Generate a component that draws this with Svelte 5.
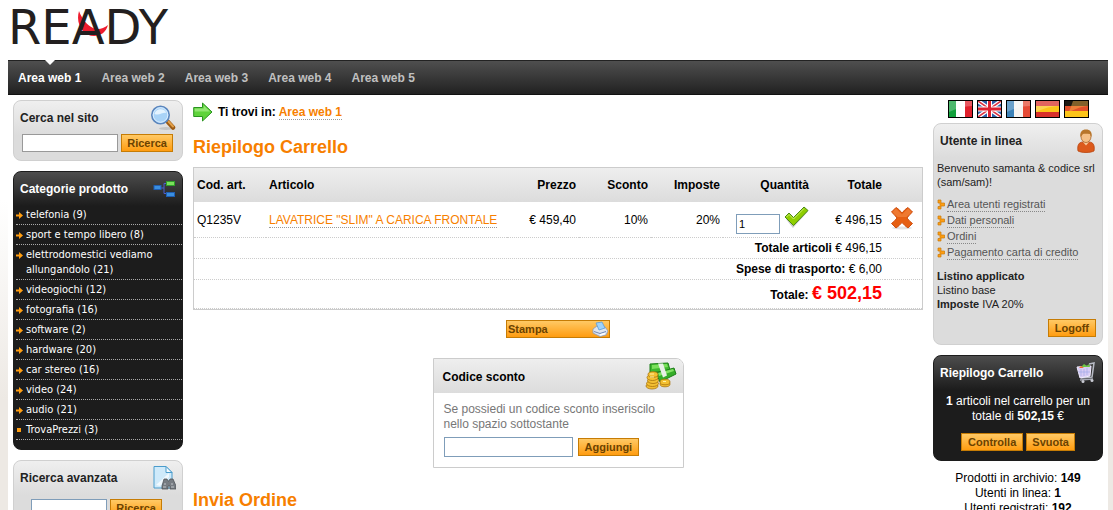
<!--
  App.svelte
  Shop cart page: top navigation, category sidebar, cart summary, user box.
-->
<script lang="ts">
  type Category = { name: string; count: number; leaf?: boolean };

  const areas = ['Area web 1', 'Area web 2', 'Area web 3', 'Area web 4', 'Area web 5'];
  let current_area = $state('Area web 1');

  const categories: Category[] = [
    { name: 'telefonia', count: 9 },
    { name: 'sport e tempo libero', count: 8 },
    { name: 'elettrodomestici vediamo allungandolo', count: 21 },
    { name: 'videogiochi', count: 12 },
    { name: 'fotografia', count: 16 },
    { name: 'software', count: 2 },
    { name: 'hardware', count: 20 },
    { name: 'car stereo', count: 16 },
    { name: 'video', count: 24 },
    { name: 'audio', count: 21 },
    { name: 'TrovaPrezzi', count: 3, leaf: true },
  ];

  const user_links = ['Area utenti registrati', 'Dati personali', 'Ordini', 'Pagamento carta di credito'];

  let quantity = $state('1');
  let search = $state('');
  let advanced = $state('');
  let discount_code = $state('');
</script>

<div class="page">
  <header>
    <a class="logo" href="#home">
      <svg viewBox="0 0 34 28" width="34" height="28" aria-hidden="true">
        <path d="M3 0C-1 14 8 25 18 25c7 0 12-4 14-11-5 4-10 5-15 3C11 14 6 8 3 0z" fill="#ee1c2e" />
      </svg>
      <span>READY</span>
    </a>
    <nav>
      {#each areas as area}
        <a href="#area" class:active={area === current_area} onclick={() => (current_area = area)}>{area}</a>
      {/each}
    </nav>
  </header>

  <div class="columns">
    <aside>
      <section class="panel">
        <div class="panel-head">
          <h2>Cerca nel sito</h2>
          <svg viewBox="0 0 26 26" width="26" height="26" aria-hidden="true">
            <ellipse cx="16" cy="23.500" rx="7" ry="1.500" fill="#c4c4c4" />
            <path d="M18 17l5 5.500" stroke="#9c5a12" stroke-width="4.500" stroke-linecap="round" />
            <path d="M18.500 16.500l4.500 5" stroke="#e2a04a" stroke-width="2" stroke-linecap="round" />
            <circle cx="10.500" cy="10" r="8.700" fill="#a9d3f7" stroke="#5b86bd" stroke-width="1.600" />
            <circle cx="10.500" cy="10" r="7.300" fill="none" stroke="#dceeff" stroke-width="1" />
            <path d="M4.500 9c1-5 9-7 12-1-4-1-7 3-12 1z" fill="#e4f3ff" />
          </svg>
        </div>
        <form class="search-row">
          <input type="text" aria-label="Cerca nel sito" bind:value={search} />
          <button type="button">Ricerca</button>
        </form>
      </section>

      <section class="panel dark">
        <div class="panel-head">
          <h2>Categorie prodotto</h2>
          <svg viewBox="0 0 24 18" width="24" height="18" aria-hidden="true">
            <path d="M8 8h4M12 3.500v10M12 3.500h3M12 13.500h3" stroke="#4a5fd0" fill="none" />
            <rect x="2" y="5.500" width="7" height="4" fill="#3b8fe0" stroke="#1f5fb4" />
            <rect x="14.500" y="1.500" width="8" height="4" fill="#7be05c" stroke="#2fa02a" />
            <rect x="14.500" y="12.500" width="8" height="4" fill="#3b8fe0" stroke="#1f5fb4" />
          </svg>
        </div>
        <ul class="categories">
          {#each categories as cat}
            <li>
              <svg viewBox="0 0 7 7" width="7" height="7" aria-hidden="true">
                {#if cat.leaf}
                  <rect x="1" y="1" width="4" height="4" fill="#ff9e12" />
                {:else}
                  <path d="M0 2.500h3V0l4 3.500L3 7V4.500H0z" fill="#ff9e12" />
                {/if}
              </svg>
              <a href="#categoria">{cat.name} ({cat.count})</a>
            </li>
          {/each}
        </ul>
      </section>

      <section class="panel">
        <div class="panel-head">
          <h2>Ricerca avanzata</h2>
          <svg viewBox="0 0 24 26" width="24" height="26" aria-hidden="true">
            <path d="M2 1.500h12l6 6V23H2z" fill="#cfeafa" stroke="#4a9ccc" />
            <path d="M4 20L17 8v4L8 21z" fill="#fff" opacity=".7" />
            <path d="M14 1.500v6h6z" fill="#f4fbff" stroke="#4a9ccc" />
            <path d="M12 14h3l1 2h1l1-2h3l3 7v3h-6v-3h-2v3h-6v-3z" fill="#777c82" stroke="#4e5358" stroke-width=".8" />
            <path d="M12 19h2M19 19h2M11 22h3M19 22h3" stroke="#c0c4c8" />
          </svg>
        </div>
        <form class="search-row advanced">
          <input type="text" aria-label="Ricerca avanzata" bind:value={advanced} />
          <button type="button">Ricerca</button>
        </form>
      </section>
    </aside>

    <main>
      <div class="breadcrumb">
        <svg viewBox="0 0 20 20" width="20" height="20" aria-hidden="true">
          <path d="M.700 5.500H9.500V1L19 10l-9.500 9v-4.500H.700z" fill="#5fd33c" stroke="#2a9420" stroke-linejoin="round" />
          <path d="M1.700 6.500h9V3.500L17 9.500H1.700z" fill="#a9ee8c" opacity=".7" />
        </svg>
        <span>Ti trovi in: <a href="#area">{current_area}</a></span>
      </div>

      <h1>Riepilogo Carrello</h1>

      <table>
        <colgroup>
          <col class="w-cell" /><col /><col class="w-cell" /><col class="w-cell" />
          <col class="w-cell" /><col class="w-qty" /><col class="w-total" /><col class="w-del" />
        </colgroup>
        <thead>
          <tr>
            <th class="left">Cod. art.</th>
            <th class="left">Articolo</th>
            <th>Prezzo</th>
            <th>Sconto</th>
            <th>Imposte</th>
            <th>Quantità</th>
            <th>Totale</th>
            <th aria-label="Elimina"></th>
          </tr>
        </thead>
        <tbody>
          <tr class="item">
            <td class="left">Q1235V</td>
            <td class="left"><a href="#articolo">LAVATRICE "SLIM" A CARICA FRONTALE</a></td>
            <td>€ 459,40</td>
            <td>10%</td>
            <td>20%</td>
            <td>
              <div class="qty">
                <input type="text" aria-label="Quantità" bind:value={quantity} />
                <button type="button" class="icon-button" aria-label="Aggiorna">
                  <svg viewBox="0 0 25 22" width="25" height="22">
                    <path d="M3 13l6 7.500L23 5" stroke="#ccc" stroke-width="2" fill="none" />
                    <path d="M1 11l4-4 4.500 4.500L20 1l4 3.500L9.500 19.500z" fill="#8fce00" stroke="#4b8a14" stroke-linejoin="round" />
                    <path d="M2.500 11L5 8.500l4.500 4.500L20 2.500" stroke="#c9ee6a" fill="none" />
                  </svg>
                </button>
              </div>
            </td>
            <td>€ 496,15</td>
            <td>
              <button type="button" class="icon-button" aria-label="Elimina">
                <svg viewBox="0 0 24 24" width="24" height="24">
                  <ellipse cx="12" cy="22" rx="10" ry="1.500" fill="#e2e2e2" />
                  <path d="M6 1.500Q9 3 12 7q3-4 6-5.500l4.500 4.500Q20 8 17 12q3 4 5.500 5.500L18 22q-3-2-6-5.500Q9 20 6 22l-4.500-4.500Q4 16 7 12 4 8 1.500 6z" fill="#e65f12" stroke="#cf4f10" stroke-linejoin="round" />
                  <path d="M6 2.500l6 6 6-6 3.500 3.500-5 5h-9l-5-5z" fill="#f58a45" opacity=".6" />
                </svg>
              </button>
            </td>
          </tr>
          <tr class="sum">
            <td colspan="7"><b>Totale articoli</b> € 496,15</td>
            <td></td>
          </tr>
          <tr class="sum">
            <td colspan="7"><b>Spese di trasporto:</b> € 6,00</td>
            <td></td>
          </tr>
          <tr class="sum total">
            <td colspan="7"><b>Totale: <strong>€ 502,15</strong></b></td>
            <td></td>
          </tr>
        </tbody>
      </table>

      <button type="button" class="print">
        Stampa
        <svg viewBox="0 0 16 16" width="16" height="16" aria-hidden="true">
          <path d="M1 8l4-3 8 1 3 4-2 4-6 1.500L1 12z" fill="#dfe5ee" stroke="#8a9ab5" stroke-width=".8" />
          <path d="M4 2l6-1 3 6-6 2z" fill="#9fd2fa" stroke="#5b9bd8" stroke-width=".8" />
          <path d="M2 10.500l6 2 6-2" stroke="#6f88b5" fill="none" />
          <path d="M8 14l5-1.500" stroke="#fff" stroke-width="1.500" />
        </svg>
      </button>

      <section class="discount">
        <div class="discount-head">
          <h2>Codice sconto</h2>
          <svg viewBox="0 0 32 28" width="32" height="28" aria-hidden="true">
            <path d="M5 2l18-1 2 7-20 3z" fill="#3fb92f" stroke="#1d7f18" />
            <path d="M7 3l15-1 1 3L7 7z" fill="#7be05c" />
            <path d="M11 11l18-5 2 6-16 8z" fill="#35ad28" stroke="#1d7f18" />
            <path d="M13 11l15-4 1 2-15 5z" fill="#82e263" />
            <path d="M13 1.500h5l4 12-4 2z" fill="#e8efe6" />
            <g fill="#f3c032" stroke="#a9740c" stroke-width=".8">
              <ellipse cx="20" cy="22" rx="5" ry="2.800" />
              <ellipse cx="20" cy="20" rx="5" ry="2.800" />
              <ellipse cx="7" cy="24" rx="6" ry="3" />
              <ellipse cx="7.500" cy="21.500" rx="6" ry="3" />
              <ellipse cx="8" cy="18.500" rx="5.500" ry="3" />
              <ellipse cx="7.500" cy="15.500" rx="5.500" ry="3" />
              <ellipse cx="8" cy="12.500" rx="5" ry="2.800" />
            </g>
            <path d="M5 12h4M5 15h4M18 19.500h3" stroke="#fff0a0" />
          </svg>
        </div>
        <div class="discount-body">
          <label for="discount">Se possiedi un codice sconto inseriscilo nello spazio sottostante</label>
          <div class="discount-row">
            <input id="discount" type="text" bind:value={discount_code} />
            <button type="button" class="wide">Aggiungi</button>
          </div>
        </div>
      </section>

      <h1>Invia Ordine</h1>
    </main>

    <aside>
      <div class="flags">
        <a href="#it" aria-label="Italiano">
          <svg viewBox="0 0 23 16"><path fill="#fff" d="M0 0h23v16H0z" /><path fill="#12a03c" d="M0 0h7v16H0z" /><path fill="#e0202c" d="M16 0h7v16h-7z" /><path d="M0 0h23v5Q12 5 0 11z" fill="#fff" opacity=".25" /></svg>
        </a>
        <a href="#en" aria-label="English">
          <svg viewBox="0 0 23 16">
            <path fill="#2f5fa8" d="M0 0h23v16H0z" />
            <path d="M0 0l23 16M23 0L0 16" stroke="#fff" stroke-width="4" />
            <path d="M0 0l23 16M23 0L0 16" stroke="#dc3040" stroke-width="1.500" />
            <path d="M11.500 0v16M0 8h23" stroke="#fff" stroke-width="5" />
            <path d="M11.500 0v16M0 8h23" stroke="#dc2030" stroke-width="3" />
          </svg>
        </a>
        <a href="#fr" aria-label="Français">
          <svg viewBox="0 0 23 16"><path fill="#f6f3f0" d="M0 0h23v16H0z" /><path fill="#3d82b8" d="M0 0h7v16H0z" /><path fill="#e54b35" d="M16 0h7v16h-7z" /><path d="M0 0h23v5Q12 5 0 11z" fill="#fff" opacity=".25" /></svg>
        </a>
        <a href="#es" aria-label="Español">
          <svg viewBox="0 0 23 16"><path fill="#d8302a" d="M0 0h23v16H0z" /><path fill="#fcc419" d="M0 5h23v6H0z" /><path d="M0 0h23v5Q12 5 0 11z" fill="#fff" opacity=".25" /></svg>
        </a>
        <a href="#de" aria-label="Deutsch">
          <svg viewBox="0 0 23 16"><path fill="#1d1812" d="M0 0h23v5H0z" /><path fill="#e2502a" d="M0 5h23v6H0z" /><path fill="#fcc419" d="M0 10h23v6H0z" /><path d="M8 0h15v5Q16 5 4 11z" fill="#ffb84a" opacity=".45" /></svg>
        </a>
      </div>

      <section class="panel">
        <div class="panel-head">
          <h2>Utente in linea</h2>
          <svg viewBox="0 0 20 24" width="20" height="24" aria-hidden="true">
            <path d="M2 22c-1-6 1-9 5-9h6c4 0 6 3 5 9-4 2-12 2-16 0z" fill="#dc5a1c" stroke="#b8450f" stroke-width=".8" />
            <path d="M7 13l3 3.500 3-3.500z" fill="#f7c99a" />
            <ellipse cx="10" cy="7.500" rx="5" ry="6" fill="#f5bf86" stroke="#a86324" stroke-width=".8" />
            <path d="M4.500 8C3.500 3 6 .500 10 .500S16.500 3 15.500 8L14 5c-3 0-5-.500-7 0z" fill="#b8752a" />
          </svg>
        </div>
        <div class="user-body">
          <p>Benvenuto samanta &amp; codice srl (sam/sam)!</p>
          <ul>
            {#each user_links as link}
              <li>
                <svg viewBox="0 0 8 11" width="8" height="11" aria-hidden="true">
                  <path d="M1 1h3v3h3.500v3H4v3H1V7.500h2V4H1z" fill="#ff9e12" stroke="#c97a0a" stroke-width=".7" />
                </svg>
                <a href="#utente">{link}</a>
              </li>
            {/each}
          </ul>
          <p><b>Listino applicato</b><br />Listino base<br /><b>Imposte</b> IVA 20%</p>
          <div class="logoff"><button type="button" class="wide">Logoff</button></div>
        </div>
      </section>

      <section class="panel dark">
        <div class="panel-head">
          <h2>Riepilogo Carrello</h2>
          <svg viewBox="0 0 20 22" width="20" height="22" aria-hidden="true">
            <path d="M13 2l5-1-2 14-11 1" fill="none" stroke="#b9bcc6" stroke-width="1.500" />
            <path d="M1 5l14-1-1 10-10 2z" fill="#d8ccf4" stroke="#f1ecff" />
            <path d="M5 5l3-3 3 2 2-2 1 3z" fill="#6cc644" />
            <path d="M3 6l2-2 3 2z" fill="#f0672c" />
            <path d="M5 7v7M8 7v7M11 6v7M2 10h12" stroke="#9aa6e6" stroke-width=".6" />
            <path d="M4 18l13-1" stroke="#a5a8b2" stroke-width="1.500" />
            <circle cx="7" cy="19.500" r="1.500" fill="#c8cad2" />
            <circle cx="16" cy="18.500" r="1.500" fill="#c8cad2" />
          </svg>
        </div>
        <div class="cart-body">
          <p><b>1</b> articoli nel carrello per un totale di <b>502,15</b> €</p>
          <div class="cart-buttons">
            <button type="button" class="wide">Controlla</button>
            <button type="button">Svuota</button>
          </div>
        </div>
      </section>

      <p class="stats">
        Prodotti in archivio: <b>149</b><br />
        Utenti in linea: <b>1</b><br />
        Utenti registrati: <b>192</b>
      </p>
    </aside>
  </div>
</div>

<style>
  :global(html) {
    scrollbar-width: none;
  }

  :global(body) {
    margin: 0;
    background: linear-gradient(#fff 200px, #ede9e4 400px) #ede9e4;
    font-family: 'Liberation Sans', Arial, sans-serif;
    font-size: 12px;
    line-height: 15px;
    color: #000;
  }

  .page {
    min-height: 100vh;
    margin: 0 5px 0 8px;
    background: #fff;
  }

  h1,
  h2,
  p,
  ul {
    margin: 0;
    padding: 0;
  }

  ul {
    list-style: none;
  }

  svg {
    display: block;
    flex: none;
  }

  /* Header */
  .logo {
    position: relative;
    display: block;
    width: max-content;
    height: 60px;
    font-family: 'DejaVu Sans', sans-serif;
    font-size: 48px;
    line-height: 54px;
    color: #231f20;
    text-decoration: none;
  }

  .logo svg {
    position: absolute;
    left: 68px;
    top: 11px;
  }

  .logo span {
    position: relative;
  }

  nav {
    display: flex;
    gap: 20px;
    height: 35px;
    box-sizing: border-box;
    padding: 0 10px;
    border-top: 1px solid #222;
    border-bottom: 1px solid #111;
    background: linear-gradient(#4f4f4f, #212121);
  }

  nav a {
    position: relative;
    font-weight: bold;
    line-height: 34px;
    color: #c0c0c0;
    text-decoration: none;
  }

  nav a.active {
    color: #fff;
  }

  nav a.active::before {
    content: '';
    position: absolute;
    top: -1px;
    left: calc(50% - 5px);
    border: 5px solid transparent;
    border-top-color: #fff;
    border-bottom: 0;
  }

  .columns {
    display: flex;
    align-items: flex-start;
    gap: 10px;
    padding: 5px;
  }

  aside {
    display: flex;
    flex-direction: column;
    flex: none;
    gap: 10px;
    width: 170px;
  }

  main {
    display: flex;
    flex-direction: column;
    flex: 1;
    min-width: 0;
  }

  /* Controls */
  input {
    box-sizing: border-box;
    min-width: 0;
    margin: 0;
    padding: 1px 2px;
    border: 1px solid #7f9db9;
    background: #fff;
    font: inherit;
    font-size: 11px;
  }

  button {
    height: 18px;
    margin: 0;
    padding: 0 5px;
    border: 1px solid #c67c05;
    background: linear-gradient(#ffc965, #ff9c10);
    font: bold 11px/16px 'Liberation Sans', Arial, sans-serif;
    color: #6b4200;
    cursor: pointer;
  }

  button.wide {
    padding: 0 6px;
  }

  .icon-button {
    height: auto;
    padding: 0;
    border: 0;
    background: none;
  }

  /* Side panels */
  .panel {
    box-sizing: border-box;
    border: 1px solid #d0d0d0;
    border-radius: 8px;
    background: linear-gradient(#efefef, #dcdcdc 34px);
    color: #222;
  }

  .panel.dark {
    border-color: #1c1c1c;
    background: linear-gradient(#4d4d4d, #1c1c1c 34px);
    color: #fff;
  }

  .panel-head {
    display: flex;
    align-items: center;
    justify-content: space-between;
    height: 33px;
    padding: 0 6px;
  }

  h2 {
    padding-top: 2px;
    font-size: 12px;
    line-height: 15px;
  }

  .search-row {
    display: flex;
    gap: 3px;
    padding: 0 9px 8px 8px;
  }

  .search-row input {
    flex: 1;
    height: 18px;
    border-color: #999;
  }

  .search-row.advanced {
    padding: 5px 20px 8px 17px;
  }

  .search-row.advanced input {
    border-color: #7f9db9;
  }

  .categories {
    padding: 0 0 9px 2px;
    font-family: 'DejaVu Sans Condensed', Tahoma, sans-serif;
    font-size: 11px;
  }

  .categories li {
    display: flex;
    gap: 3px;
    padding: 2px 0;
    border-bottom: 1px dotted #aaa;
  }

  .categories svg {
    margin-top: 5px;
  }

  .categories a {
    color: #fff;
    text-decoration: none;
  }

  .user-body {
    padding: 4px 6px 7px 3px;
    font-size: 11px;
    line-height: 14px;
  }

  .user-body ul {
    padding: 7px 0 9px;
  }

  .user-body li {
    display: flex;
    align-items: center;
    gap: 2px;
    height: 16px;
  }

  .user-body a {
    border-bottom: 1px dotted #888;
    line-height: 14px;
    color: #555;
    text-decoration: none;
  }

  .logoff {
    display: flex;
    justify-content: flex-end;
    padding-top: 8px;
  }

  .cart-body {
    padding: 5px 8px 9px;
    text-align: center;
  }

  .cart-buttons {
    display: flex;
    justify-content: center;
    gap: 3px;
    padding-top: 9px;
  }

  .flags {
    display: flex;
    justify-content: center;
    gap: 4px;
    margin-bottom: -5px;
  }

  .flags svg {
    width: 23px;
    height: 16px;
    border: 1px solid #000;
  }

  .stats {
    text-align: center;
  }

  /* Main column */
  .breadcrumb {
    display: flex;
    align-items: center;
    gap: 5px;
    height: 24px;
    font-weight: bold;
  }

  main a {
    border-bottom: 1px dotted #999;
    color: #f77f00;
    text-decoration: none;
  }

  h1 {
    padding: 12px 0 9px;
    font-size: 18px;
    line-height: 22px;
    color: #f77f00;
  }

  table {
    width: 100%;
    table-layout: fixed;
    border: 1px solid #ccc;
    border-spacing: 0;
    background: #fff;
  }

  .w-cell {
    width: 72px;
  }

  .w-qty {
    width: 89px;
  }

  .w-total {
    width: 73px;
  }

  .w-del {
    width: 37px;
  }

  th,
  td {
    padding: 1px 3px 0;
    text-align: right;
  }

  .left {
    text-align: left;
  }

  th {
    height: 33px;
    background: linear-gradient(#eee, #dcdcdc);
  }

  td {
    border-bottom: 1px dotted #ccc;
  }

  .item td {
    height: 34px;
  }

  .item .icon-button svg {
    display: block;
  }

  .item td:last-child {
    padding-right: 8px;
  }

  .qty {
    display: flex;
    justify-content: flex-end;
    gap: 4px;
  }

  .qty input {
    align-self: flex-end;
    width: 44px;
    height: 20px;
  }

  .qty .icon-button {
    padding-bottom: 6px;
  }

  .sum td {
    height: 19px;
  }

  .sum.total td {
    height: 27px;
  }

  .sum strong {
    font-size: 18px;
    color: #f00;
  }

  .print {
    display: flex;
    align-items: center;
    justify-content: space-between;
    align-self: center;
    width: 104px;
    margin: 10px 0 20px;
    padding: 0 1px;
  }

  .discount {
    align-self: center;
    box-sizing: border-box;
    width: 251px;
    margin-bottom: 9px;
    border: 1px solid #ccc;
    border-top-right-radius: 8px;
  }

  .discount-head {
    display: flex;
    align-items: center;
    justify-content: space-between;
    height: 34px;
    padding: 0 6px 0 9px;
    border-top-right-radius: 7px;
    background: linear-gradient(#eee, #dcdcdc);
  }

  .discount-body {
    padding: 9px 10px 10px;
    color: #777;
  }

  .discount-row {
    display: flex;
    align-items: center;
    gap: 5px;
    padding-top: 5px;
  }

  .discount-row input {
    width: 129px;
    height: 20px;
  }
</style>
